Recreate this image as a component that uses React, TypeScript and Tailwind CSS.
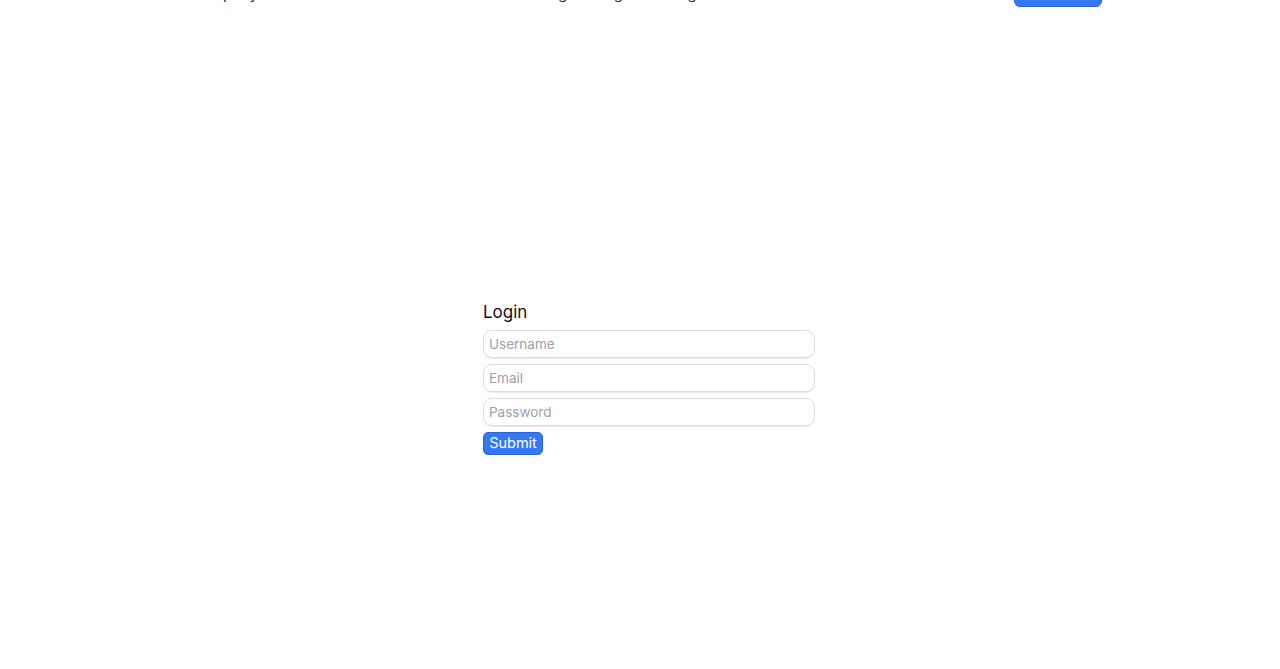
import React from "react";

export default function App() {
  const inputCls =
    "h-[28px] w-full rounded-[9px] border border-[#dcdcdc] px-[5px] text-[13.5px] shadow-[0_1px_1px_rgba(0,0,0,0.08)] placeholder:text-[#9ca0aa] outline-none focus:outline-none";
  return (
    <div className="min-h-[669px] bg-white font-['Inter',sans-serif] text-gray-900 overflow-hidden">
      <header className="-mt-[20px] h-[27px] flex items-center justify-between px-[190px] text-[15px]">
        <div className="text-gray-800 leading-6">Company</div>
        <nav className="flex gap-6 text-gray-800 leading-6 ml-[260px]">
          <span>Pricing</span>
          <span>Blog</span>
          <span>Settings</span>
        </nav>
        <button className="ml-auto mr-[-12px] w-[88px] h-[26px] rounded-md bg-[#3478f6] border border-[#2b63d6] text-white text-sm">
          Get started
        </button>
      </header>
      <main className="flex justify-center pt-[291px] pl-[18px]">
        <form className="w-[332px] flex flex-col gap-[6px]" onSubmit={(e) => e.preventDefault()}>
          <h2 className="text-[17px] leading-7 text-[#111] -mb-[2px]">Login</h2>
          <input placeholder="Username" className={inputCls} />
          <input placeholder="Email" className={inputCls} />
          <input type="password" placeholder="Password" autoFocus className={inputCls} />
          <div className="flex">
            <button
              type="submit"
              className="h-[23px] w-[60px] rounded-[5px] bg-[#3478f6] border border-[#2b63d6] text-white text-[14.5px] leading-none"
            >
              Submit
            </button>
          </div>
        </form>
      </main>
    </div>
  );
}
